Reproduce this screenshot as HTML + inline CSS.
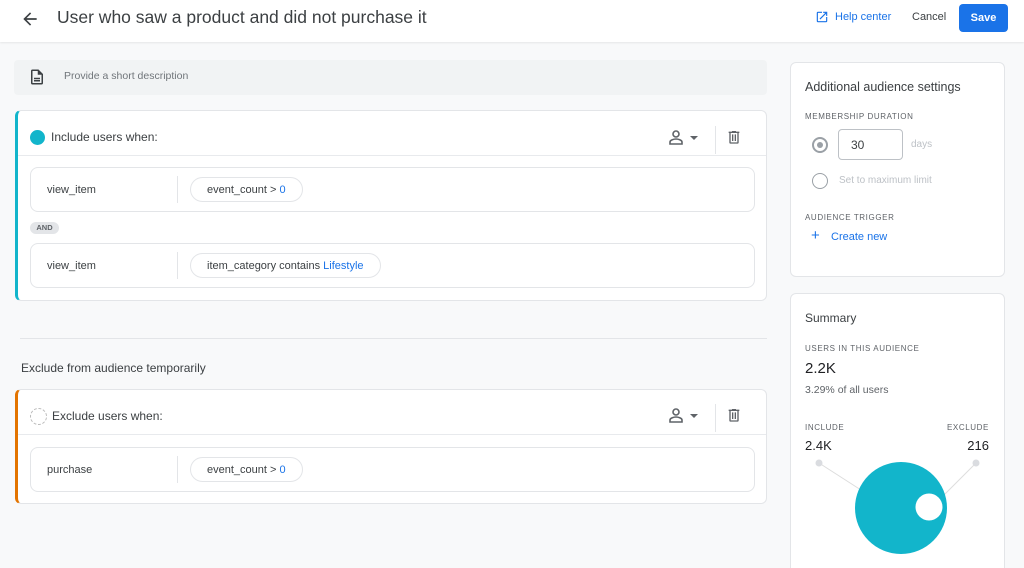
<!DOCTYPE html>
<html style="overflow:hidden;width:1024px;height:568px"><head><style>
*{box-sizing:border-box;margin:0;padding:0}
body{width:1024px;height:568px;overflow:hidden;background:#f8f9fa;font-family:"Liberation Sans",Arial,sans-serif;color:#202124;position:relative}
.a{position:absolute}
.card{position:absolute;background:#fff;border:1px solid #e3e5e8;border-radius:6px}
.row{position:absolute;left:12px;right:11px;background:#fff;border:1px solid #e3e5e8;border-radius:8px;height:45px}
.row .ev{position:absolute;left:16px;top:16px;font-size:11px;color:#3c4043}
.row .sep{position:absolute;left:146px;top:8px;bottom:8px;border-left:1px solid #e3e5e8}
.chip{position:absolute;left:159px;top:9px;height:25px;border:1px solid #e3e5e8;border-radius:13px;font-size:11px;color:#3c4043;padding:6px 16px 0}
.blue{color:#1a73e8}
.cap{font-size:8px;letter-spacing:.6px;color:#5f6368}
</style></head><body>
<div class="a" style="left:0;top:0;width:1024px;height:42px;background:#fff;box-shadow:0 1px 2px rgba(0,0,0,.08)"></div>
<svg class="a" style="left:20px;top:9px" width="20" height="20" viewBox="0 0 24 24"><path d="M20 11H7.8l5.6-5.6L12 4l-8 8 8 8 1.4-1.4L7.8 13H20z" fill="#3c4043"/></svg>
<div class="a" style="left:57px;top:7px;font-size:17.5px;color:#3c4043">User who saw a product and did not purchase it</div>
<svg class="a" style="left:815px;top:10px" width="14" height="14" viewBox="0 0 24 24"><path d="M19 19H5V5h7V3H5a2 2 0 0 0-2 2v14a2 2 0 0 0 2 2h14a2 2 0 0 0 2-2v-7h-2zM14 3v2h3.6l-9.8 9.8 1.4 1.4L19 6.4V10h2V3z" fill="#1a73e8"/></svg>
<div class="a blue" style="left:835px;top:11px;font-size:11px">Help center</div>
<div class="a" style="left:912px;top:11px;font-size:11px;color:#3c4043">Cancel</div>
<div class="a" style="left:959px;top:4px;width:49px;height:28px;background:#1a73e8;border-radius:4px;color:#fff;font-size:11px;font-weight:bold;text-align:center;line-height:28px">Save</div>

<div class="a" style="left:14px;top:60px;width:753px;height:35px;background:#f1f3f4;border-radius:4px"></div>
<svg class="a" style="left:28px;top:68px" width="18" height="18" viewBox="0 0 24 24"><path d="M14 2H6a2 2 0 0 0-2 2v16a2 2 0 0 0 2 2h12a2 2 0 0 0 2-2V8zm4 18H6V4h7v5h5zM8 13h8v2H8zm0 3h8v2H8z" fill="#3c4043"/></svg>
<div class="a" style="left:64px;top:70px;font-size:10.5px;color:#70757a">Provide a short description</div>

<div class="card" style="left:15px;top:110px;width:752px;height:191px;border-left:3px solid #12b5cb">
 <div class="a" style="left:12px;top:19px;width:15px;height:15px;border-radius:50%;background:#12b5cb"></div>
 <div class="a" style="left:33px;top:19px;font-size:12px;color:#3c4043">Include users when:</div>
 <svg class="a" style="left:650px;top:18px" width="36" height="18" viewBox="0 0 36 18"><circle cx="8" cy="5" r="3" fill="none" stroke="#5f6368" stroke-width="1.6"/><path d="M2 15v-2c0-2 4-3 6-3s6 1 6 3v2z" fill="none" stroke="#5f6368" stroke-width="1.6"/><path d="M22 7l4 4 4-4z" fill="#5f6368"/></svg>
 <div class="a" style="left:697px;top:15px;height:28px;border-left:1px solid #e3e5e8"></div>
 <svg class="a" style="left:708px;top:18px" width="16" height="16" viewBox="0 0 24 24"><path d="M15 4V3H9v1H4v2h1v14a2 2 0 0 0 2 2h10a2 2 0 0 0 2-2V6h1V4zm2 16H7V6h10zM9 8h2v10H9zm4 0h2v10h-2z" fill="#5f6368"/></svg>
 <div class="a" style="left:0;right:0;top:44px;border-top:1px solid #e8eaed"></div>
 <div class="row" style="top:56px"><div class="ev">view_item</div><div class="sep"></div><div class="chip">event_count &gt; <span class="blue">0</span></div></div>
 <div class="a" style="left:12px;top:111px;width:29px;height:12px;background:#e3e5e8;border-radius:6px;font-size:7.5px;font-weight:bold;color:#5f6368;text-align:center;line-height:12px">AND</div>
 <div class="row" style="top:132px"><div class="ev">view_item</div><div class="sep"></div><div class="chip">item_category contains <span class="blue">Lifestyle</span></div></div>
</div>

<div class="a" style="left:20px;top:338px;width:747px;border-top:1px solid #e3e5e8"></div>
<div class="a" style="left:21px;top:361px;font-size:12px;color:#3c4043">Exclude from audience temporarily</div>

<div class="card" style="left:15px;top:389px;width:752px;height:115px;border-left:3px solid #e37400">
 <div class="a" style="left:12px;top:18px;width:17px;height:17px;border-radius:50%;border:1px dashed #bbb"></div>
 <div class="a" style="left:34px;top:19px;font-size:12px;color:#3c4043">Exclude users when:</div>
 <svg class="a" style="left:650px;top:17px" width="36" height="18" viewBox="0 0 36 18"><circle cx="8" cy="5" r="3" fill="none" stroke="#5f6368" stroke-width="1.6"/><path d="M2 15v-2c0-2 4-3 6-3s6 1 6 3v2z" fill="none" stroke="#5f6368" stroke-width="1.6"/><path d="M22 7l4 4 4-4z" fill="#5f6368"/></svg>
 <div class="a" style="left:697px;top:14px;height:28px;border-left:1px solid #e3e5e8"></div>
 <svg class="a" style="left:708px;top:17px" width="16" height="16" viewBox="0 0 24 24"><path d="M15 4V3H9v1H4v2h1v14a2 2 0 0 0 2 2h10a2 2 0 0 0 2-2V6h1V4zm2 16H7V6h10zM9 8h2v10H9zm4 0h2v10h-2z" fill="#5f6368"/></svg>
 <div class="a" style="left:0;right:0;top:44px;border-top:1px solid #e8eaed"></div>
 <div class="row" style="top:57px"><div class="ev">purchase</div><div class="sep"></div><div class="chip">event_count &gt; <span class="blue">0</span></div></div>
</div>

<div class="card" style="left:790px;top:62px;width:215px;height:215px">
 <div class="a" style="left:14px;top:17px;font-size:12.5px;color:#3c4043">Additional audience settings</div>
 <div class="a cap" style="left:14px;top:49px">MEMBERSHIP DURATION</div>
 <div class="a" style="left:21px;top:74px;width:16px;height:16px;border-radius:50%;border:2px solid #9aa0a6"></div>
 <div class="a" style="left:26px;top:79px;width:6px;height:6px;border-radius:50%;background:#9aa0a6"></div>
 <div class="a" style="left:47px;top:66px;width:65px;height:31px;border:1px solid #bdc1c6;border-radius:4px;font-size:12px;padding:8px 0 0 12px;color:#3c4043">30</div>
 <div class="a" style="left:120px;top:76px;font-size:10px;color:#bdc1c6">days</div>
 <div class="a" style="left:21px;top:110px;width:16px;height:16px;border-radius:50%;border:1.5px solid #9aa0a6"></div>
 <div class="a" style="left:48px;top:112px;font-size:10px;color:#bdc1c6">Set to maximum limit</div>
 <div class="a cap" style="left:14px;top:150px">AUDIENCE TRIGGER</div>
 <div class="a blue" style="left:20px;top:164px;font-size:15px">+</div>
 <div class="a blue" style="left:40px;top:168px;font-size:11px">Create new</div>
</div>

<div class="card" style="left:790px;top:293px;width:215px;height:285px">
 <div class="a" style="left:14px;top:17px;font-size:12px;color:#3c4043">Summary</div>
 <div class="a cap" style="left:14px;top:50px">USERS IN THIS AUDIENCE</div>
 <div class="a" style="left:14px;top:66px;font-size:15px">2.2K</div>
 <div class="a" style="left:14px;top:90px;font-size:10.5px;color:#5f6368">3.29% of all users</div>
 <div class="a cap" style="left:14px;top:129px">INCLUDE</div>
 <div class="a cap" style="right:15px;top:129px">EXCLUDE</div>
 <div class="a" style="left:14px;top:144px;font-size:13px">2.4K</div>
 <div class="a" style="right:15px;top:144px;font-size:13px">216</div>
 <svg class="a" style="left:0;top:140px" width="215" height="140" viewBox="0 0 215 140"><line x1="28" y1="29" x2="70" y2="56" stroke="#ddd"/><line x1="185" y1="29" x2="150" y2="64" stroke="#ddd"/><circle cx="28" cy="29" r="3.5" fill="#dadce0"/><circle cx="185" cy="29" r="3.5" fill="#dadce0"/><circle cx="110" cy="74" r="46" fill="#12b5cb"/><circle cx="138" cy="73" r="13.5" fill="#fff"/></svg>
</div>
</body></html>
